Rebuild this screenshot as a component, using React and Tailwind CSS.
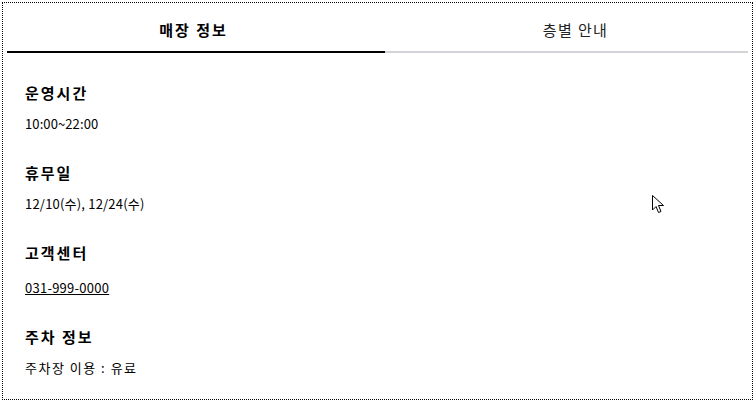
import React, { useState } from 'react';

const font = { fontFamily: '"Noto Sans CJK KR", "Noto Sans", sans-serif' };

// widths and nudges copied from the screenshot, the two tabs are not equal
const TABS = [
  { label: '매장 정보', box: 'w-[378px] pr-[5px]' },
  { label: '층별 안내', box: 'flex-1 pl-[18px]' },
];

const INFO = [
  { title: '운영시간', value: '10:00~22:00', track: 'tracking-[0.1px]' },
  { title: '휴무일', value: '12/10(수), 12/24(수)', track: 'tracking-[0.2px]' },
  { title: '고객센터', value: '031-999-0000', track: 'tracking-[0.25px]', link: true },
  { title: '주차 정보', value: '주차장 이용 : 유료', track: 'tracking-[1.5px]' },
];

const Cursor = () => (
  <svg className="absolute left-[652px] top-[195px]" width="14" height="20" viewBox="0 0 14 20">
    <path d="M0.5 0.5 L0.5 15 L4 11.5 L6.5 17.5 L9 16.5 L6.5 10.5 L11.5 10.5 Z" fill="#fff" stroke="#000" strokeWidth="1" />
  </svg>
);

export default function App() {
  const [tab, setTab] = useState(0);

  return (
    <div className="relative w-[755px] h-[402px] bg-white p-[2px]" style={font}>
      <div className="h-full border border-dotted border-black p-1">
        <div className="flex">
          {TABS.map((t, i) => (
            <button
              key={t.label}
              onClick={() => setTab(i)}
              className={`${t.box} h-[46px] pt-[1px] text-[15px] leading-5 border-b-2 ${tab === i ? 'font-bold tracking-[2px] text-black border-black' : 'tracking-[1.4px] text-[#222] border-[#d4d4d8]'}`}
            >
              {t.label}
            </button>
          ))}
        </div>

        <div className="pl-[18px] pt-[30px] flex flex-col gap-[29px]">
          {INFO.map(item => (
            <div key={item.title}>
              <h3 className="text-[15px] leading-5 font-bold tracking-[2px] text-black mb-[11px]">{item.title}</h3>
              {item.link ? (
                <a href="#" className={`text-[13px] leading-5 text-black underline ${item.track}`}>{item.value}</a>
              ) : (
                <p className={`text-[13px] leading-5 text-black ${item.track}`}>{item.value}</p>
              )}
            </div>
          ))}
        </div>
      </div>
      <Cursor />
    </div>
  );
}
